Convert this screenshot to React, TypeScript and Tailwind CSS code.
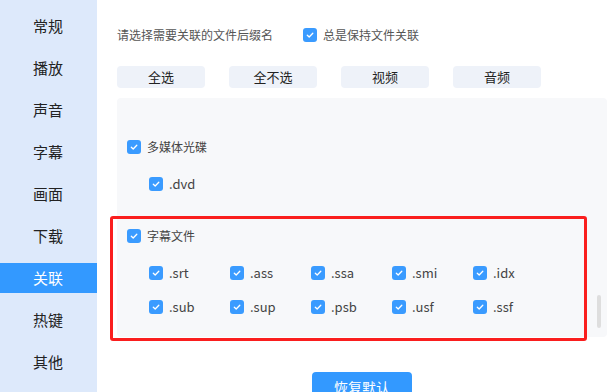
import type { ReactNode } from "react";

const navItems = ["常规", "播放", "声音", "字幕", "画面", "下载", "关联", "热键", "其他"];
const subtitleExts = [".srt", ".ass", ".ssa", ".smi", ".idx", ".sub", ".sup", ".psb", ".usf", ".ssf"];
const quickButtons = ["全选", "全不选", "视频", "音频"];

function Check() {
  return (
    <span className="w-[14px] h-[14px] shrink-0 rounded-[3px] bg-[#3a9bff] flex items-center justify-center">
      <svg width="10" height="10" viewBox="0 0 10 10" fill="none">
        <path d="M2.3 5.2 L4.2 7 L7.8 3.2" stroke="white" strokeWidth="1.3" strokeLinecap="round" strokeLinejoin="round" />
      </svg>
    </span>
  );
}

function CheckRow({ children, className = "" }: { children: ReactNode; className?: string }) {
  return (
    <div className={`flex items-center gap-[6px] h-[14px] ${className}`}>
      <Check />
      {children}
    </div>
  );
}

export default function App() {
  return (
    <div className="relative w-[615px] h-[392px] overflow-hidden flex bg-white font-['Noto_Sans_CJK_SC',sans-serif]">
      {/* Sidebar */}
      <div className="w-[97px] shrink-0 bg-[#dde9fb] flex flex-col gap-3 pt-[11px]">
        {navItems.map((item) => (
          <div
            key={item}
            className={`h-[30px] shrink-0 pl-[33px] flex items-center text-[15px] ${
              item === "关联" ? "bg-[#3399ff] text-white" : "text-[#222]"
            }`}
          >
            {item}
          </div>
        ))}
      </div>

      {/* Main */}
      <div className="flex-1 flex flex-col pl-5 pr-2 pt-[28px]">
        <div className="flex items-center h-[14px] shrink-0">
          <span className="w-[186px] text-[12px] text-[#555]">请选择需要关联的文件后缀名</span>
          <CheckRow>
            <span className="text-[12px] text-[#555]">总是保持文件关联</span>
          </CheckRow>
        </div>

        <div className="flex gap-[24px] mt-[24px] shrink-0">
          {quickButtons.map((b) => (
            <div
              key={b}
              className="w-[88px] h-[22px] rounded-[4px] bg-[#eef2f9] flex items-center justify-center text-[13px] text-[#222]"
            >
              {b}
            </div>
          ))}
        </div>

        <div className="relative shrink-0 mt-[10px] h-[239px] rounded-[4px] bg-[#f7f8fa] pl-[10px] pt-[42px]">
          <CheckRow>
            <span className="text-[12px] text-[#444]">多媒体光碟</span>
          </CheckRow>
          <CheckRow className="mt-[23px] ml-[22px]">
            <span className="text-[13px] text-[#444]">.dvd</span>
          </CheckRow>

          <CheckRow className="mt-[38px]">
            <span className="text-[12px] text-[#444]">字幕文件</span>
          </CheckRow>
          <div className="grid grid-cols-5 w-[405px] gap-y-5 mt-[23px] ml-[22px]">
            {subtitleExts.map((ext) => (
              <CheckRow key={ext}>
                <span className="text-[13px] text-[#444]">{ext}</span>
              </CheckRow>
            ))}
          </div>

          <div className="absolute right-[6px] top-[197px] w-[4px] h-[33px] rounded-full bg-[#dedede]" />
        </div>

        <div className="shrink-0 mt-[35px] ml-[195px] w-[100px] h-[30px] rounded-[4px] bg-[#3399ff] text-white text-[14px] flex items-center justify-center">
          恢复默认
        </div>
      </div>

      {/* Highlight annotation */}
      <div className="absolute left-[110px] top-[216px] w-[477px] h-[125px] border-[3px] border-[#fa1e1e] rounded-[3px] pointer-events-none" />
    </div>
  );
}
